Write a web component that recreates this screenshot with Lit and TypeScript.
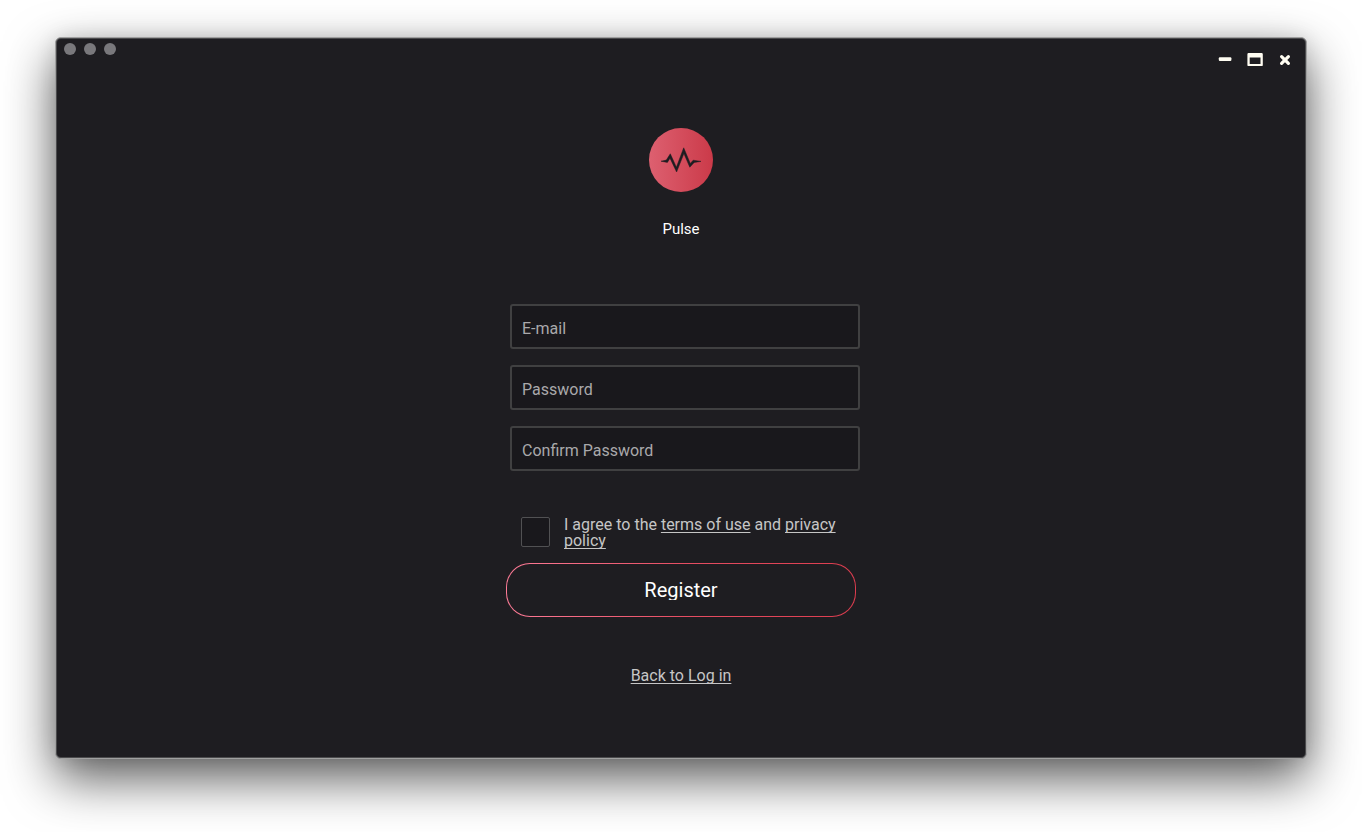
import { LitElement, css, html, svg } from "lit";
import { customElement } from "lit/decorators.js";

const fields = [
  { name: "email", type: "email", label: "E-mail" },
  { name: "password", type: "password", label: "Password" },
  { name: "confirm", type: "password", label: "Confirm Password" },
];

const windowActions = [
  { label: "Minimize", shape: svg`<rect x="1.8" y="5.2" width="12.6" height="3.8" rx="1" />` },
  {
    label: "Maximize",
    shape: svg`<path fill-rule="evenodd" d="M1.6 1h13q1.2 0 1.2 1.2v10.7q0 1.2-1.2 1.2H1.6q-1.2 0-1.2-1.2V2.2Q.4 1 1.6 1zM2.7 5.4v6.5h10.8V5.4z" />`,
  },
  {
    label: "Close",
    shape: svg`<path d="M4.6 4.6l6.8 6.8M11.4 4.6l-6.8 6.8" fill="none" stroke="currentColor" stroke-width="3.2" stroke-linecap="round" />`,
  },
];

@customElement("app-root")
export class AppRoot extends LitElement {
  static styles = css`
    :host {
      box-sizing: border-box;
      min-height: 100vh;
      padding: 37px 55px 73px;
      display: flex;
      background: #fff;
      color: #c6c6c6;
      font: 16px/16px Roboto, "Open Sans", sans-serif;
    }
    *,
    *::before {
      box-sizing: border-box;
    }
    .window {
      flex: 1;
      display: flex;
      flex-direction: column;
      border: 1px solid #a0a0a0;
      border-radius: 6px;
      background: #1e1d21;
      box-shadow: inset 0 0 0 1px #4b4b4d, 0 20px 50px rgba(0, 0, 0, 0.64),
        0 0 20px rgba(0, 0, 0, 0.1);
    }
    .titlebar {
      display: flex;
      justify-content: space-between;
      align-items: flex-start;
      padding: 5px 13px 0 8px;
    }
    .lights {
      display: flex;
      gap: 8px;
    }
    .light {
      width: 12px;
      height: 12px;
      border-radius: 50%;
      background: #79787c;
    }
    .actions {
      display: flex;
      gap: 14px;
      padding-top: 9px;
    }
    .action {
      display: block;
      width: 16px;
      height: 16px;
      padding: 0;
      border: 0;
      background: none;
      color: #fffdf2;
    }
    .action svg,
    .logo {
      display: block;
    }
    main {
      display: flex;
      flex-direction: column;
      align-items: center;
      padding: 60px 16px 64px;
    }
    .logo {
      width: 64px;
      height: 64px;
    }
    h1 {
      margin: 29px 0 67px;
      color: #fff;
      font-size: 15px;
      line-height: 16px;
      font-weight: 400;
    }
    form {
      width: 100%;
      max-width: 350px;
    }
    .fields {
      display: grid;
      gap: 16px;
      margin: 0 -4px 0 4px;
    }
    .field {
      width: 100%;
      height: 45px;
      padding: 4px 10px 0;
      border: 2px solid #404041;
      border-radius: 3px;
      background: #19181c;
      color: #c6c6c6;
      font: inherit;
      outline: none;
    }
    .field::placeholder {
      color: #a9a9ab;
      opacity: 1;
    }
    .agree {
      display: flex;
      gap: 14px;
      margin: 46px 0 14px;
      padding-left: 15px;
    }
    .agree label {
      flex: 1;
    }
    .check {
      appearance: none;
      flex: none;
      width: 29px;
      height: 30px;
      margin: 0;
      border: 1px solid #515153;
      border-radius: 2px;
      background: #19181c;
    }
    .check:checked {
      background: #dc4a5a;
    }
    a {
      color: inherit;
      text-decoration: underline;
      text-underline-offset: 2px;
      text-decoration-skip-ink: none;
    }
    .register {
      display: flex;
      align-items: center;
      justify-content: center;
      width: 100%;
      height: 54px;
      padding: 0;
      border: 1px solid transparent;
      border-radius: 24px;
      background: linear-gradient(#1e1d21, #1e1d21) padding-box,
        linear-gradient(90deg, #ff7c98, #e64e63 50%, #dc3c4e) border-box;
      color: #fff;
      font: 20px/20px Roboto, "Open Sans", sans-serif;
    }
    .register span {
      overflow: hidden;
    }
    .back {
      margin-top: 51px;
    }
  `;

  render() {
    return html`
      <div class="window">
        <header class="titlebar">
          <div class="lights">
            <span class="light"></span><span class="light"></span><span class="light"></span>
          </div>
          <div class="actions">
            ${windowActions.map(
              (a) => html`<button class="action" type="button" aria-label=${a.label}>
                <svg width="16" height="16" viewBox="0 0 16 16" fill="currentColor" aria-hidden="true">${a.shape}</svg>
              </button>`
            )}
          </div>
        </header>
        <main>
          <svg class="logo" viewBox="0 0 64 64" aria-hidden="true">
            <defs>
              <linearGradient id="disc" x1="0" y1="0" x2="1" y2="0">
                <stop offset="0" stop-color="#dd6070" />
                <stop offset="1" stop-color="#cb3a49" />
              </linearGradient>
            </defs>
            <circle cx="32" cy="32" r="32" fill="url(#disc)" />
            <path
              fill="#1e1d21"
              stroke="#1e1d21"
              stroke-width=".5"
              d="M12 33.2L17.3 32.1L21.3 25.8L27.4 39.2L34.7 19.8L41.3 35.5L44.2 32.2L52 33.4L45.2 34.4L40.8 39.2L34.9 25.6L27.6 44L21 30.2L18.4 34.4Z"
            />
          </svg>
          <h1>Pulse</h1>
          <form @submit=${(e: Event) => e.preventDefault()}>
            <div class="fields">
              ${fields.map(
                (f) => html`<input class="field" type=${f.type} name=${f.name} placeholder=${f.label} aria-label=${f.label} />`
              )}
            </div>
            <div class="agree">
              <input class="check" type="checkbox" id="agree" />
              <label for="agree">I agree to the <a href="#terms">terms of use</a> and <a href="#privacy">privacy policy</a></label>
            </div>
            <button class="register" type="submit"><span>Register</span></button>
          </form>
          <a class="back" href="#login">Back to Log in</a>
        </main>
      </div>
    `;
  }
}
